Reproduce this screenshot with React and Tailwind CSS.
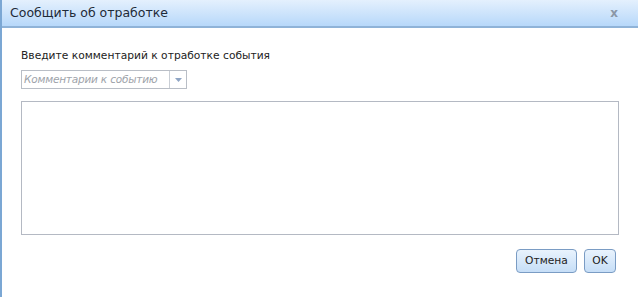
import React from "react";

export default function App() {
  return (
    <div className="w-[638px] h-[297px] bg-white flex flex-col border-l-2 border-[#7ba7d4] font-['DejaVu_Sans',sans-serif] overflow-hidden">
      <div className="h-[28px] shrink-0 flex items-center justify-between pl-[8px] pr-[20px] bg-gradient-to-b from-[#e4f0fd] to-[#b7d8fa] border-b-2 border-[#8fb3d8]">
        <span className="text-[12.5px] text-[#1e2a38]">Сообщить об отработке</span>
        <span className="text-[12px] font-bold text-[#8b97a6]">x</span>
      </div>
      <div className="flex flex-col pl-[19px] pr-[19px] pt-[21px]">
        <label className="text-[10.7px] text-[#222] leading-[14px]">Введите комментарий к отработке события</label>
        <div className="mt-[7px] flex w-[166px] h-[19px] border border-[#b9bec6]">
          <div className="flex-1 flex items-center px-[2px] text-[10.5px] tracking-[-0.2px] italic text-[#9ea3aa] overflow-hidden whitespace-nowrap">
            Комментарии к событию
          </div>
          <div className="w-[17px] border-l border-[#c9ced5] flex items-center justify-center">
            <svg width="7" height="4" viewBox="0 0 7 4">
              <path d="M0 0h7L3.5 4z" fill="#8fa5c4" />
            </svg>
          </div>
        </div>
        <div className="mt-[12px] h-[134px] border border-[#b4b9c3]" />
        <div className="mt-[14px] flex justify-end gap-[7px] pr-[3px]">
          <button className="h-[24px] w-[61px] rounded-[4px] border border-[#7a9cc4] bg-gradient-to-b from-[#e9f3fd] to-[#c6def7] text-[10.7px] text-[#222]">
            Отмена
          </button>
          <button className="h-[24px] w-[32px] rounded-[4px] border border-[#7a9cc4] bg-gradient-to-b from-[#e9f3fd] to-[#c6def7] text-[10.7px] text-[#222]">
            OK
          </button>
        </div>
      </div>
    </div>
  );
}
